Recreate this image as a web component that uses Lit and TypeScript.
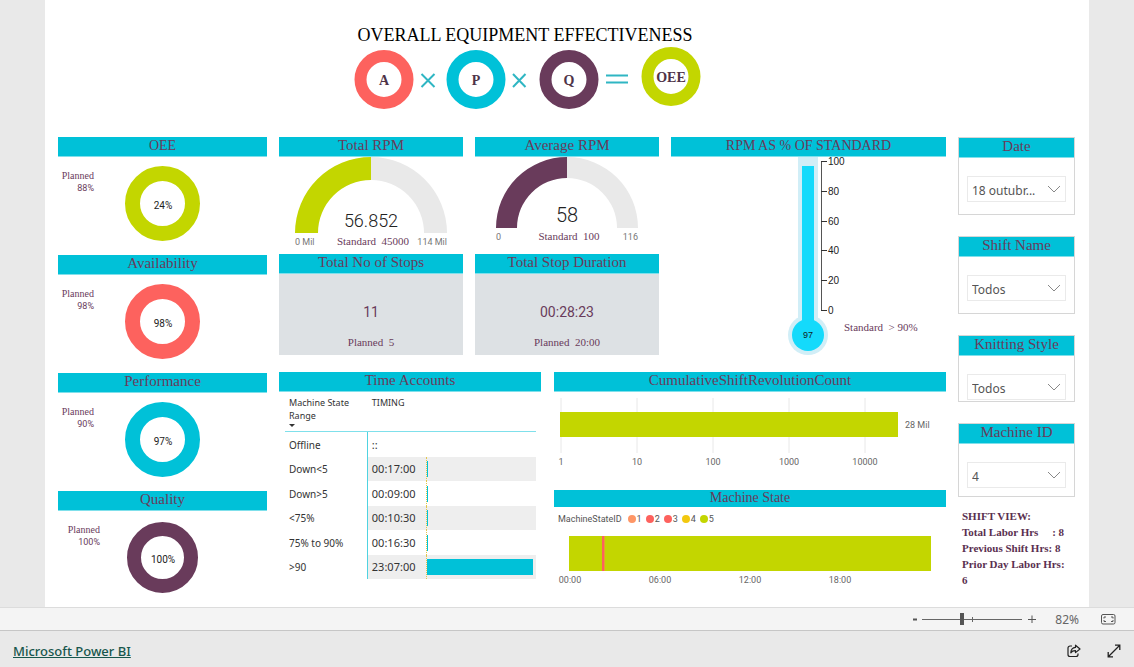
import { LitElement, html, svg, css, nothing } from "lit";
import { customElement, property } from "lit/decorators.js";

const CYAN = "#00c1d8";
const CORAL = "#fd625e";
const PLUM = "#693b5b";
const LIME = "#c3d600";

const heading = css`
  :host {
    display: block;
    font-family: "Liberation Serif", Cambria, serif;
    color: #693b5b;
  }
  .bar {
    margin: 0;
    height: 19px;
    line-height: 17px;
    background: #00c1d8;
    border-bottom: 1px solid #7fe0eb;
    font-size: 15px;
    font-weight: 400;
    text-align: center;
    white-space: nowrap;
    color: #693b5b;
  }
  .bar.caps {
    font-size: 14px;
  }
  .bar.short {
    height: 17px;
    line-height: 15px;
    font-size: 14px;
    border-bottom: 0;
  }
  svg {
    display: block;
    width: 100%;
  }
`;

@customElement("ring-card")
class RingCard extends LitElement {
  @property() label = "";
  @property() planned = "";
  @property() value = "";
  @property() color = "";
  @property({ type: Boolean }) compact = false;

  static styles = [
    heading,
    css`
      .body {
        display: grid;
        grid-template-columns: 1fr 75px 1fr;
        padding-top: 9px;
      }
      .target {
        width: 36px;
        margin: 4px 0 0;
        text-align: right;
        font-size: 10px;
        line-height: 12px;
      }
      .target.compact {
        width: 42px;
      }
      .num {
        font-family: Roboto, sans-serif;
        font-size: 9px;
        display: block;
      }
      .pct {
        font: 400 10px Roboto, sans-serif;
        fill: #222;
      }
    `,
  ];

  render() {
    const r = this.compact ? 28.5 : 30;
    const w = this.compact ? 14 : 15;
    return html`
      <h2 class="bar ${this.label === "OEE" ? "caps" : ""}">${this.label}</h2>
      <div class="body">
        <p class="target ${this.compact ? "compact" : ""}">
          Planned <span class="num">${this.planned}</span>
        </p>
        <svg viewBox="0 0 75 75" role="img" aria-label="${this.label} ${this.value}">
          <circle cx="37.5" cy="37.5" r=${r} fill="none" stroke=${this.color} stroke-width=${w}></circle>
          <text class="pct" x="38" y="43" text-anchor="middle">${this.value}</text>
        </svg>
      </div>
    `;
  }
}

@customElement("gauge-card")
class GaugeCard extends LitElement {
  @property() label = "";
  @property() value = "";
  @property() low = "";
  @property() high = "";
  @property() standard = "";
  @property() color = "";
  @property({ type: Number }) outer = 75;
  @property({ type: Number }) inner = 52;

  static styles = [
    heading,
    css`
      .value {
        font: 300 18px Roboto, sans-serif;
        fill: #222;
      }
      .value.large {
        font-size: 20px;
      }
      .end {
        font: 9px Roboto, sans-serif;
        fill: #777;
      }
      .std {
        font-size: 11px;
        fill: #693b5b;
        white-space: pre;
      }
    `,
  ];

  render() {
    const o = this.outer;
    const i = this.inner;
    const cx = 92;
    const size = this.value.length < 4 ? "large" : "";
    const half = (side: number, sweep: number) =>
      `M${cx + side * o} ${o}A${o} ${o} 0 0 ${sweep} ${cx} 0V${o - i}A${i} ${i} 0 0 ${1 - sweep} ${cx + side * i} ${o}Z`;
    return html`
      <h2 class="bar">${this.label}</h2>
      <svg viewBox="0 0 184 97">
        <path d=${half(-1, 1)} fill=${this.color}></path>
        <path d=${half(1, 0)} fill="#e9e9e9"></path>
        <text class="value ${size}" x="92" y=${o - 6} text-anchor="middle">${this.value}</text>
        <text class="end" x=${cx - o} y=${o + 12}>${this.low}</text>
        <text class="end" x=${cx + o} y=${o + 12} text-anchor="end">${this.high}</text>
        <text class="std" x="94" y=${o + 12} text-anchor="middle">Standard  ${this.standard}</text>
      </svg>
    `;
  }
}

@customElement("stat-card")
class StatCard extends LitElement {
  @property() label = "";
  @property() value = "";
  @property() planned = "";

  static styles = [
    heading,
    css`
      .body {
        background: #dde1e4;
        text-align: center;
        padding: 28px 0 5px;
      }
      .value {
        margin: 0;
        font: 14px/20px Roboto, sans-serif;
      }
      .planned {
        margin: 12px 0 0;
        font-size: 11px;
        line-height: 16px;
        white-space: pre;
      }
    `,
  ];

  render() {
    return html`
      <h2 class="bar">${this.label}</h2>
      <div class="body">
        <p class="value">${this.value}</p>
        <p class="planned">Planned  ${this.planned}</p>
      </div>
    `;
  }
}

@customElement("thermo-card")
class ThermoCard extends LitElement {
  static styles = [
    heading,
    css`
      .tick {
        font: 10px "Liberation Sans", Arial, sans-serif;
        fill: #222;
      }
      .read {
        font: 9px "Liberation Sans", Arial, sans-serif;
        fill: #122;
      }
      .std {
        font-size: 11px;
        fill: #693b5b;
        white-space: pre;
      }
    `,
  ];

  render() {
    return html`
      <h2 class="bar caps">RPM AS % OF STANDARD</h2>
      <svg viewBox="0 0 275 198">
        <rect x="127" y="0" width="20" height="165" fill="#d1eef7"></rect>
        <circle cx="137" cy="178" r="20" fill="#d1eef7"></circle>
        <rect x="131" y="9" width="12" height="160" fill="#14dafb"></rect>
        <circle cx="137" cy="178" r="16" fill="#14dafb"></circle>
        <text class="read" x="137" y="181" text-anchor="middle">97</text>
        <path d="M155 4.500H150.500V153.500H155" fill="none" stroke="#555"></path>
        ${[100, 80, 60, 40, 20, 0].map((v, n) => {
          const y = 4.5 + Math.round(n * 29.8);
          return svg`<path d="M150 ${y}h6" stroke="#333"></path>
            <text class="tick" x="157" y=${y + 3.5}>${v}</text>`;
        })}
        <text class="std" x="173" y="174">Standard  &gt; 90%</text>
      </svg>
    `;
  }
}

interface TimeRow {
  range: string;
  time: string;
  share: number;
}

@customElement("time-accounts")
class TimeAccounts extends LitElement {
  rows: TimeRow[] = [
    { range: "Offline", time: "::", share: -1 },
    { range: "Down<5", time: "00:17:00", share: 1 },
    { range: "Down>5", time: "00:09:00", share: 1 },
    { range: "<75%", time: "00:10:30", share: 1 },
    { range: "75% to 90%", time: "00:16:30", share: 1 },
    { range: ">90", time: "23:07:00", share: 97 },
  ];

  static styles = [
    heading,
    css`
      .wrap {
        padding: 4px 5px 0 6px;
        font-family: "Noto Sans", "Segoe UI", sans-serif;
        color: #333;
      }
      table {
        width: 100%;
        border-collapse: separate;
        border-spacing: 0;
        table-layout: fixed;
        font-size: 10px;
      }
      .c1 {
        width: 33%;
      }
      .c2 {
        width: 23%;
      }
      th {
        height: 35px;
        padding: 0 0 0 4px;
        font-size: 9px;
        line-height: 13px;
        font-weight: 400;
        text-align: left;
        vertical-align: top;
      }
      thead th {
        border-bottom: 1px solid #7fe0eb;
      }
      .sort {
        width: 6px;
        height: 3px;
        margin-top: 2px;
      }
      tbody th,
      td {
        padding: 0 0 0 4px;
        height: 24px;
        line-height: 16px;
        font-size: 10px;
        vertical-align: middle;
      }
      tbody tr:nth-child(odd) th,
      tbody tr:nth-child(odd) td {
        height: 25px;
      }
      tbody th {
        border-right: 1px solid #4fd3e1;
      }
      tbody tr:nth-child(even) td,
      tbody tr:last-child td {
        background: #eee;
      }
      td.time {
        font-size: 11px;
      }
      td.track {
        padding: 0;
      }
      td.track.on {
        border-left: 1px dotted #e3c64a;
      }
      .fill {
        height: 16px;
        background: #00c1d8;
      }
    `,
  ];

  render() {
    return html`
      <h2 class="bar">Time Accounts</h2>
      <div class="wrap">
        <table>
          <colgroup>
            <col class="c1" />
            <col class="c2" />
            <col />
          </colgroup>
          <thead>
            <tr>
              <th scope="col">
                Machine State<br />Range
                <svg class="sort" viewBox="0 0 6 3"><path d="M0 0H6L3 3Z" fill="#333"></path></svg>
              </th>
              <th scope="col" colspan="2">TIMING</th>
            </tr>
          </thead>
          <tbody>
            ${this.rows.map(
              (r) => html`<tr>
                <th scope="row">${r.range}</th>
                <td class="time">${r.time}</td>
                <td class="track ${r.share > 0 ? "on" : ""}">
                  ${r.share > 0 ? html`<div class="fill" style="width:${r.share}%"></div>` : nothing}
                </td>
              </tr>`
            )}
          </tbody>
        </table>
      </div>
    `;
  }
}

@customElement("revolution-card")
class RevolutionCard extends LitElement {
  static styles = [
    heading,
    css`
      text {
        font: 9px Roboto, sans-serif;
        fill: #666;
      }
    `,
  ];

  render() {
    return html`
      <h2 class="bar">CumulativeShiftRevolutionCount</h2>
      <svg viewBox="0 0 392 98">
        ${["1", "10", "100", "1000", "10000"].map(
          (t, n) => svg`<path d="M${7 + n * 76} 6V61" stroke="#e8e8e8"></path>
            <text x=${7 + n * 76} y="73" text-anchor="middle">${t}</text>`
        )}
        <rect x="6" y="20" width="338" height="25" fill=${LIME}></rect>
        <text x="351" y="36">28 Mil</text>
      </svg>
    `;
  }
}

@customElement("machine-state")
class MachineState extends LitElement {
  static styles = [
    heading,
    css`
      .legend {
        display: flex;
        align-items: center;
        gap: 4px;
        margin: 0;
        padding: 4px 4px 0;
        list-style: none;
        font: 9px/16px Roboto, sans-serif;
        color: #555;
      }
      .title {
        margin-right: 2px;
      }
      .key {
        display: flex;
        align-items: center;
        gap: 1px;
      }
      .dot {
        width: 8px;
        height: 8px;
      }
      text {
        font: 9px Roboto, sans-serif;
        fill: #666;
      }
    `,
  ];

  render() {
    const keys = ["#fe9666", CORAL, CORAL, "#f2c80f", LIME];
    return html`
      <h2 class="bar short">Machine State</h2>
      <ul class="legend">
        <li class="title">MachineStateID</li>
        ${keys.map(
          (c, n) => html`<li class="key">
            <svg class="dot" viewBox="0 0 8 8"><circle cx="4" cy="4" r="4" fill=${c}></circle></svg>${n + 1}
          </li>`
        )}
      </ul>
      <svg viewBox="0 0 392 60">
        <rect x="15" y="9" width="362" height="35" fill=${LIME}></rect>
        <rect x="48" y="9" width="2" height="35" fill=${CORAL}></rect>
        <rect x="50" y="9" width="1" height="35" fill="#e8a030"></rect>
        ${["00:00", "06:00", "12:00", "18:00"].map(
          (t, n) => svg`<text x=${16 + n * 90} y="56" text-anchor="middle">${t}</text>`
        )}
      </svg>
    `;
  }
}

@customElement("slicer-box")
class SlicerBox extends LitElement {
  @property() label = "";
  @property() value = "";
  @property() fit = "roomy";

  static styles = [
    heading,
    css`
      .box {
        border: 1px solid #d6d6d6;
      }
      .bar {
        display: block;
      }
      .body {
        padding: 18px 8px 12px;
      }
      .body.medium {
        padding-bottom: 8px;
      }
      .body.tight {
        padding-bottom: 1px;
      }
      .field {
        display: grid;
        grid-template-columns: 1fr 18px;
        align-items: center;
        border: 1px solid #eaeaea;
      }
      select {
        grid-area: 1 / 1 / 2 / 3;
        appearance: none;
        width: 100%;
        height: 24px;
        margin: 0;
        padding: 2px 0 0 4px;
        border: 0;
        background: transparent;
        font: 12px "Noto Sans", "Segoe UI", sans-serif;
        color: #555;
      }
      .chevron {
        grid-area: 1 / 2;
        width: 14px;
        height: 8px;
        pointer-events: none;
      }
    `,
  ];

  render() {
    return html`
      <div class="box">
        <label class="bar" for="pick">${this.label}</label>
        <div class="body ${this.fit}">
          <div class="field">
            <select id="pick">
              <option>${this.value}</option>
            </select>
            <svg class="chevron" viewBox="0 0 14 8">
              <path d="M1 1L7 7L13 1" fill="none" stroke="#888"></path>
            </svg>
          </div>
        </div>
      </div>
    `;
  }
}

@customElement("app-root")
class AppRoot extends LitElement {
  static styles = css`
    :host {
      display: flex;
      flex-direction: column;
      min-height: 100vh;
      background: #e9e9e9;
      font-family: "Liberation Serif", Cambria, serif;
    }
    main {
      flex: 1;
      margin: 0 45px;
      padding: 23px 14px 0 13px;
      background: #fff;
    }
    .intro {
      display: grid;
      justify-items: center;
      padding-right: 83px;
    }
    h1 {
      margin: 0;
      font-size: 18px;
      line-height: 24px;
      font-weight: 400;
      color: #000;
    }
    .formula {
      display: block;
      width: 352px;
      height: 63px;
    }
    .letter {
      font: bold 14px "Liberation Serif", Cambria, serif;
      fill: #4e3348;
    }
    .board {
      display: grid;
      grid-template-columns: 209fr 667fr 117fr;
      column-gap: 12px;
      align-items: start;
      padding-top: 27px;
    }
    .rings {
      display: grid;
      gap: 14px;
    }
    .middle {
      display: grid;
      gap: 17px;
    }
    .upper {
      display: grid;
      grid-template-columns: 184fr 184fr 275fr;
      column-gap: 12px;
      align-items: start;
    }
    .tall {
      grid-area: 1 / 3 / 3 / 4;
    }
    .lower {
      display: grid;
      grid-template-columns: 262fr 392fr;
      column-gap: 13px;
      align-items: start;
    }
    .slicers {
      display: grid;
      gap: 21px;
    }
    .shift {
      margin: 11px 0 0;
      padding-left: 4px;
      font-size: 11px;
      line-height: 16px;
      font-weight: 700;
      color: #5a3050;
      white-space: pre;
    }
    .zoom {
      display: flex;
      align-items: center;
      justify-content: flex-end;
      height: 22px;
      padding-right: 18px;
      background: #f4f4f4;
      border-top: 1px solid #dcdcdc;
      border-bottom: 1px solid #c6c6c6;
      font: 12px "Noto Sans", "Segoe UI", sans-serif;
      color: #666;
    }
    button {
      display: grid;
      place-items: center;
      margin: 0;
      padding: 0;
      border: 0;
      background: none;
      color: #555;
    }
    .step {
      width: 14px;
      height: 20px;
    }
    .step svg {
      display: block;
      width: 8px;
      height: 8px;
    }
    .range {
      appearance: none;
      width: 100px;
      height: 12px;
      margin: 0 3px 0 0;
      background: linear-gradient(#666, #666) 0 6px / 100% 1px no-repeat,
        linear-gradient(#666, #666) 50px 4px / 1px 5px no-repeat;
    }
    .range::-webkit-slider-thumb {
      appearance: none;
      width: 4px;
      height: 12px;
      background: #555;
    }
    .percent {
      width: 40px;
      margin-right: 22px;
      text-align: right;
    }
    .fit svg {
      display: block;
      width: 15px;
      height: 11px;
    }
    footer {
      display: flex;
      align-items: center;
      height: 36px;
      padding: 4px 13px 0;
      box-sizing: border-box;
      font: 13px "Noto Sans", "Segoe UI", sans-serif;
    }
    a {
      margin-right: auto;
      color: #17564c;
      font-weight: 500;
    }
    footer button svg {
      display: block;
      width: 14px;
      height: 14px;
    }
    .share {
      margin-right: 26px;
    }
  `;

  formula() {
    const rings: [number, number, string, string][] = [
      [35, 32.5, CORAL, "A"],
      [127, 32.5, CYAN, "P"],
      [220, 32.5, PLUM, "Q"],
      [322, 29.5, LIME, "OEE"],
    ];
    return html`<svg class="formula" viewBox="0 0 352 63" role="img" aria-label="A × P × Q = OEE">
      ${rings.map(
        ([x, y, c, t]) => svg`<circle cx=${x} cy=${y} r="23.500" fill="none" stroke=${c} stroke-width="12"></circle>
          <text class="letter" x=${x} y=${y + 5} text-anchor="middle">${t}</text>`
      )}
      <path
        d="M72.500 27L85.500 40M85.500 27L72.500 40M164 27L176.500 40M176.500 27L164 40M257 28.500H279M257 35.500H279"
        fill="none" stroke="#2fb6c3" stroke-width="2"
      ></path>
    </svg>`;
  }

  render() {
    return html`
      <main>
        <header class="intro">
          <h1>OVERALL EQUIPMENT EFFECTIVENESS</h1>
          ${this.formula()}
        </header>
        <div class="board">
          <section class="rings">
            <ring-card label="OEE" planned="88%" value="24%" color=${LIME}></ring-card>
            <ring-card label="Availability" planned="98%" value="98%" color=${CORAL}></ring-card>
            <ring-card label="Performance" planned="90%" value="97%" color=${CYAN}></ring-card>
            <ring-card label="Quality" planned="100%" value="100%" color=${PLUM} compact></ring-card>
          </section>
          <section class="middle">
            <div class="upper">
              <gauge-card label="Total RPM" value="56.852" low="0 Mil" high="114 Mil" standard="45000"
                color=${LIME} outer="76" inner="53"></gauge-card>
              <gauge-card label="Average RPM" value="58" low="0" high="116" standard="100"
                color=${PLUM} outer="71" inner="50"></gauge-card>
              <thermo-card class="tall"></thermo-card>
              <stat-card label="Total No of Stops" value="11" planned="5"></stat-card>
              <stat-card label="Total Stop Duration" value="00:28:23" planned="20:00"></stat-card>
            </div>
            <div class="lower">
              <time-accounts></time-accounts>
              <div>
                <revolution-card></revolution-card>
                <machine-state></machine-state>
              </div>
            </div>
          </section>
          <aside>
            <div class="slicers">
              <slicer-box label="Date" value="18 outubr..."></slicer-box>
              <slicer-box label="Shift Name" value="Todos"></slicer-box>
              <slicer-box label="Knitting Style" value="Todos" fit="tight"></slicer-box>
              <slicer-box label="Machine ID" value="4" fit="medium"></slicer-box>
            </div>
            <p class="shift">${"SHIFT VIEW:\nTotal Labor Hrs     : 8\nPrevious Shift Hrs: 8\nPrior Day Labor Hrs:\n6"}</p>
          </aside>
        </div>
      </main>
      <div class="zoom">
        <button class="step" aria-label="Zoom out">
          <svg viewBox="0 0 8 8"><path d="M2 4.500H6" stroke="#555" stroke-width="2"></path></svg>
        </button>
        <input class="range" type="range" min="0" max="207" value="82" aria-label="Zoom" />
        <button class="step" aria-label="Zoom in">
          <svg viewBox="0 0 8 8"><path d="M0 4.500H8M4 0.500V8" stroke="#555"></path></svg>
        </button>
        <span class="percent">82%</span>
        <button class="fit" aria-label="Fit to page">
          <svg viewBox="0 0 15 11" fill="none" stroke="#555">
            <rect x="0.500" y="0.500" width="13.500" height="9.500" rx="1.500"></rect>
            <path d="M5 3H3V4.500M3 6V7.500H5M10 3H12V4.500M12 6V7.500H10"></path>
          </svg>
        </button>
      </div>
      <footer>
        <a href="#powerbi">Microsoft Power BI</a>
        <button class="share" aria-label="Share">
          <svg viewBox="0 0 14 14" fill="none" stroke="#222" stroke-width="1.200">
            <path d="M5 2H3A2 2 0 0 0 1 4V10.500A2 2 0 0 0 3 12.500H9A2 2 0 0 0 11 10.500V9.500"></path>
            <path d="M8.500 1.200L13 5L8.500 8.600V6.600C6.500 6.500 5 7 3.800 8.800C4 5.500 5.800 3.600 8.500 3.400Z" stroke-linejoin="round"></path>
          </svg>
        </button>
        <button aria-label="Full screen">
          <svg viewBox="0 0 14 14" fill="none" stroke="#222" stroke-width="1.300">
            <path d="M1.500 12.500L12.500 1.500M8 1.200H12.800V6M1.200 8V12.800H6"></path>
          </svg>
        </button>
      </footer>
    `;
  }
}
